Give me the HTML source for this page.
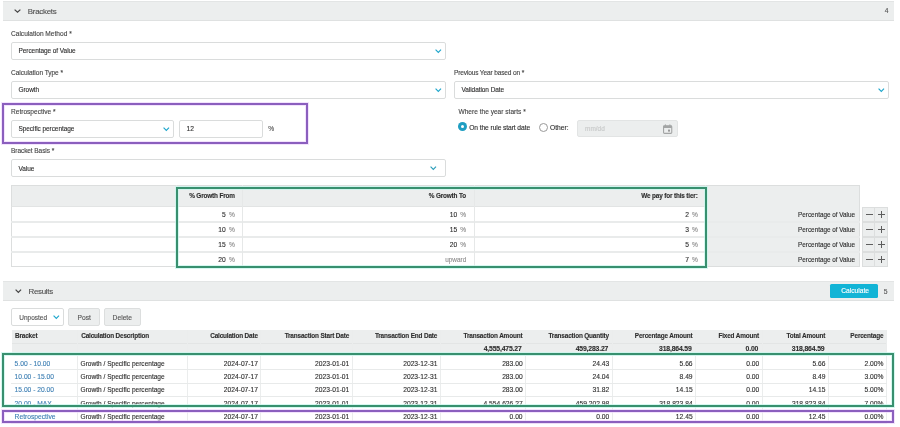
<!DOCTYPE html>
<html><head><meta charset="utf-8"><style>
html,body{margin:0;padding:0;background:#fff;}
body{width:900px;height:427px;position:relative;overflow:hidden;font-family:"Liberation Sans",sans-serif;}
.t{position:absolute;white-space:nowrap;line-height:1;-webkit-font-smoothing:antialiased;}
.b{position:absolute;}
</style></head><body>
<div id="w" style="position:absolute;left:0;top:0;width:900px;height:427px;will-change:transform">
<div class="b" style="left:3px;top:1px;width:891px;height:20px;background:#eceeee;border-top:1px solid #e3e5e5;border-bottom:1px solid #dfe1e1;box-sizing:border-box"></div>
<svg class="b" style="left:12.20px;top:7.30px;overflow:visible" width="11.00" height="7.90" viewBox="0 0 11.00 7.90"><polyline points="2.62,2.62 5.50,5.27 8.38,2.62" fill="none" stroke="#444" stroke-width="1.25" stroke-linecap="butt" stroke-linejoin="miter"/></svg>
<div class="t" style="left:27.8px;top:7.99px;font-size:7.93px;font-weight:400;color:#505050;letter-spacing:0px;-webkit-text-stroke:0.12px #505050;letter-spacing:-0.28px">Brackets</div>
<div class="t" style="right:11.5px;top:8.33px;font-size:6.7px;font-weight:400;color:#555;letter-spacing:0px;-webkit-text-stroke:0.12px #555;">4</div>
<div class="t" style="left:11px;top:31.02px;font-size:6.59px;font-weight:400;color:#454545;letter-spacing:0px;-webkit-text-stroke:0.12px #454545;">Calculation Method *</div>
<div class="b" style="left:11px;top:42px;width:435px;height:18px;background:#fff;border:1px solid #dadcdc;border-radius:2px;box-sizing:border-box"></div>
<div class="t" style="left:18.5px;top:48.11px;font-size:6.49px;font-weight:400;color:#2e2e2e;letter-spacing:0px;-webkit-text-stroke:0.12px #2e2e2e;letter-spacing:-0.06px">Percentage of Value</div>
<svg class="b" style="left:432.60px;top:46.60px;overflow:visible" width="10.60" height="7.90" viewBox="0 0 10.60 7.90"><polyline points="2.58,2.58 5.30,5.32 8.02,2.58" fill="none" stroke="#1ea6cc" stroke-width="1.15" stroke-linecap="butt" stroke-linejoin="miter"/></svg>
<div class="t" style="left:11px;top:70.02px;font-size:6.59px;font-weight:400;color:#454545;letter-spacing:0px;-webkit-text-stroke:0.12px #454545;letter-spacing:-0.05px">Calculation Type *</div>
<div class="b" style="left:11px;top:81px;width:435px;height:18px;background:#fff;border:1px solid #dadcdc;border-radius:2px;box-sizing:border-box"></div>
<div class="t" style="left:18.5px;top:87.11px;font-size:6.49px;font-weight:400;color:#2e2e2e;letter-spacing:0px;-webkit-text-stroke:0.12px #2e2e2e;letter-spacing:-0.06px">Growth</div>
<svg class="b" style="left:432.60px;top:85.60px;overflow:visible" width="10.60" height="7.90" viewBox="0 0 10.60 7.90"><polyline points="2.58,2.58 5.30,5.33 8.02,2.58" fill="none" stroke="#1ea6cc" stroke-width="1.15" stroke-linecap="butt" stroke-linejoin="miter"/></svg>
<div class="t" style="left:454px;top:70.22px;font-size:6.59px;font-weight:400;color:#454545;letter-spacing:0px;-webkit-text-stroke:0.12px #454545;letter-spacing:-0.16px">Previous Year based on *</div>
<div class="b" style="left:454px;top:81px;width:435px;height:18px;background:#fff;border:1px solid #dadcdc;border-radius:2px;box-sizing:border-box"></div>
<div class="t" style="left:461.5px;top:87.11px;font-size:6.49px;font-weight:400;color:#2e2e2e;letter-spacing:0px;-webkit-text-stroke:0.12px #2e2e2e;letter-spacing:-0.06px">Validation Date</div>
<svg class="b" style="left:875.60px;top:85.60px;overflow:visible" width="10.60" height="7.90" viewBox="0 0 10.60 7.90"><polyline points="2.58,2.58 5.30,5.33 8.03,2.58" fill="none" stroke="#1ea6cc" stroke-width="1.15" stroke-linecap="butt" stroke-linejoin="miter"/></svg>
<div class="b" style="left:2px;top:103px;width:306px;height:41px;border:2px solid #8b5fbe;box-sizing:border-box;box-shadow:0 0 0 1px rgba(238,215,252,.7),inset 0 0 0 1px rgba(238,215,252,.7);"></div>
<div class="t" style="left:11px;top:109.42px;font-size:6.59px;font-weight:400;color:#454545;letter-spacing:0px;-webkit-text-stroke:0.12px #454545;">Retrospective *</div>
<div class="b" style="left:11px;top:120px;width:163px;height:18px;background:#fff;border:1px solid #dadcdc;border-radius:2px;box-sizing:border-box"></div>
<div class="t" style="left:18.5px;top:126.11px;font-size:6.49px;font-weight:400;color:#2e2e2e;letter-spacing:0px;-webkit-text-stroke:0.12px #2e2e2e;letter-spacing:-0.06px">Specific percentage</div>
<svg class="b" style="left:160.60px;top:124.60px;overflow:visible" width="10.60" height="7.90" viewBox="0 0 10.60 7.90"><polyline points="2.58,2.58 5.30,5.33 8.02,2.58" fill="none" stroke="#1ea6cc" stroke-width="1.15" stroke-linecap="butt" stroke-linejoin="miter"/></svg>
<div class="b" style="left:179px;top:120px;width:84px;height:18px;background:#fff;border:1px solid #dadcdc;border-radius:2px;box-sizing:border-box"></div>
<div class="t" style="left:186.6px;top:126.13px;font-size:6.7px;font-weight:400;color:#2e2e2e;letter-spacing:0px;-webkit-text-stroke:0.12px #2e2e2e;">12</div>
<div class="t" style="left:268.2px;top:126.13px;font-size:6.7px;font-weight:400;color:#555;letter-spacing:0px;-webkit-text-stroke:0.12px #555;">%</div>
<div class="t" style="left:458.5px;top:109.02px;font-size:6.59px;font-weight:400;color:#454545;letter-spacing:0px;-webkit-text-stroke:0.12px #454545;">Where the year starts *</div>
<div class="b" style="left:458px;top:122.3px;width:9px;height:9px;border-radius:50%;background:#1f9ec2"></div>
<div class="b" style="left:461px;top:125.3px;width:3px;height:3px;border-radius:50%;background:#fff"></div>
<div class="t" style="left:469.2px;top:124.73px;font-size:6.7px;font-weight:400;color:#2e2e2e;letter-spacing:0px;-webkit-text-stroke:0.12px #2e2e2e;letter-spacing:-0.09px">On the rule start date</div>
<div class="b" style="left:538.5px;top:122.5px;width:9px;height:9px;border-radius:50%;border:0.8px solid #999;box-sizing:border-box;background:#fff"></div>
<div class="t" style="left:550px;top:124.73px;font-size:6.7px;font-weight:400;color:#2e2e2e;letter-spacing:0px;-webkit-text-stroke:0.12px #2e2e2e;">Other:</div>
<div class="b" style="left:577px;top:120px;width:101px;height:17px;background:#eceeee;border:1px solid #e2e4e4;border-radius:2px;box-sizing:border-box"></div>
<div class="t" style="left:585px;top:126.11px;font-size:6.49px;font-weight:400;color:#c8caca;letter-spacing:0px;-webkit-text-stroke:0.12px #c8caca;">mm/dd</div>
<svg class="b" style="left:663px;top:123.5px" width="9.5" height="10" viewBox="0 0 9.5 10"><rect x="0.55" y="1.8" width="8.2" height="7.6" rx="0.9" fill="none" stroke="#a3a5a5" stroke-width="1.1"/><rect x="0.55" y="1.8" width="8.2" height="2.2" fill="#a3a5a5"/><line x1="2.4" y1="0.4" x2="2.4" y2="2.2" stroke="#a3a5a5" stroke-width="1"/><line x1="6.9" y1="0.4" x2="6.9" y2="2.2" stroke="#a3a5a5" stroke-width="1"/><rect x="5" y="5.6" width="2" height="2" fill="#999"/></svg>
<div class="t" style="left:11px;top:148.02px;font-size:6.59px;font-weight:400;color:#454545;letter-spacing:0px;-webkit-text-stroke:0.12px #454545;letter-spacing:-0.1px">Bracket Basis *</div>
<div class="b" style="left:11px;top:159px;width:435px;height:18px;background:#fff;border:1px solid #dadcdc;border-radius:2px;box-sizing:border-box"></div>
<div class="t" style="left:18.5px;top:165.91px;font-size:6.49px;font-weight:400;color:#2e2e2e;letter-spacing:0px;-webkit-text-stroke:0.12px #2e2e2e;letter-spacing:-0.06px">Value</div>
<svg class="b" style="left:428.40px;top:163.60px;overflow:visible" width="10.60" height="7.90" viewBox="0 0 10.60 7.90"><polyline points="2.58,2.58 5.30,5.33 8.02,2.58" fill="none" stroke="#2b9db9" stroke-width="1.15" stroke-linecap="butt" stroke-linejoin="miter"/></svg>
<div class="b" style="left:11px;top:185px;width:849px;height:82px;background:#fff;border:1px solid #dcdede;box-sizing:border-box"></div>
<div class="b" style="left:11px;top:185px;width:849px;height:22px;background:#eceeee;border:1px solid #dcdede;border-bottom:1px solid #e2e4e4;box-sizing:border-box"></div>
<div class="b" style="left:705px;top:206px;width:155px;height:61px;background:#eceeee;border-right:1px solid #dcdede;border-bottom:1px solid #dcdede;box-sizing:border-box"></div>
<div class="b" style="left:11px;top:221px;width:849px;height:2px;background:#e9ebeb"></div>
<div class="b" style="left:11px;top:236px;width:849px;height:2px;background:#e9ebeb"></div>
<div class="b" style="left:11px;top:251px;width:849px;height:2px;background:#e9ebeb"></div>
<div class="b" style="left:175.5px;top:185px;width:1.5px;height:82px;background:#e6e8e8"></div>
<div class="b" style="left:241.5px;top:185px;width:1.5px;height:82px;background:#e6e8e8"></div>
<div class="b" style="left:473.5px;top:185px;width:1.5px;height:82px;background:#e6e8e8"></div>
<div class="b" style="left:704.5px;top:185px;width:1.5px;height:82px;background:#e6e8e8"></div>
<div class="t" style="right:665.2px;top:193.37px;font-size:6.41px;font-weight:700;color:#2e2e2e;letter-spacing:-0.16px;-webkit-text-stroke:0.12px #2e2e2e;">% Growth From</div>
<div class="t" style="right:434px;top:193.37px;font-size:6.41px;font-weight:700;color:#2e2e2e;letter-spacing:-0.16px;-webkit-text-stroke:0.12px #2e2e2e;">% Growth To</div>
<div class="t" style="right:202.39999999999998px;top:193.37px;font-size:6.41px;font-weight:700;color:#2e2e2e;letter-spacing:-0.16px;-webkit-text-stroke:0.12px #2e2e2e;">We pay for this tier:</div>
<div class="t" style="right:674.2px;top:211.73px;font-size:6.7px;font-weight:400;color:#2e2e2e;letter-spacing:0px;-webkit-text-stroke:0.12px #2e2e2e;">5</div>
<div class="t" style="right:665.2px;top:211.82px;font-size:6.59px;font-weight:400;color:#8a8a8a;letter-spacing:0px;-webkit-text-stroke:0.12px #8a8a8a;">%</div>
<div class="t" style="right:442.8px;top:211.73px;font-size:6.7px;font-weight:400;color:#2e2e2e;letter-spacing:0px;-webkit-text-stroke:0.12px #2e2e2e;">10</div>
<div class="t" style="right:433.8px;top:211.82px;font-size:6.59px;font-weight:400;color:#8a8a8a;letter-spacing:0px;-webkit-text-stroke:0.12px #8a8a8a;">%</div>
<div class="t" style="right:211px;top:211.73px;font-size:6.7px;font-weight:400;color:#2e2e2e;letter-spacing:0px;-webkit-text-stroke:0.12px #2e2e2e;">2</div>
<div class="t" style="right:202.20000000000005px;top:211.82px;font-size:6.59px;font-weight:400;color:#8a8a8a;letter-spacing:0px;-webkit-text-stroke:0.12px #8a8a8a;">%</div>
<div class="t" style="right:45px;top:212.04px;font-size:6.33px;font-weight:400;color:#2e2e2e;letter-spacing:0px;-webkit-text-stroke:0.12px #2e2e2e;">Percentage of Value</div>
<div class="b" style="left:862.3px;top:206.8px;width:12.900000000000091px;height:15.0px;background:#eceeee;border:1px solid #dcdede;box-sizing:border-box"></div>
<div class="b" style="left:875.2px;top:206.8px;width:12.799999999999955px;height:15.0px;background:#eceeee;border:1px solid #dcdede;border-left:none;box-sizing:border-box"></div>
<div class="b" style="left:865.5px;top:213.8px;width:7.2999999999999545px;height:1.0999999999999943px;background:#5e5e5e"></div>
<div class="b" style="left:877.6px;top:213.8px;width:7.399999999999977px;height:1.0999999999999943px;background:#5e5e5e"></div>
<div class="b" style="left:880.75px;top:210.60000000000002px;width:1.1000000000000227px;height:7.399999999999977px;background:#5e5e5e"></div>
<div class="t" style="right:674.2px;top:226.73px;font-size:6.7px;font-weight:400;color:#2e2e2e;letter-spacing:0px;-webkit-text-stroke:0.12px #2e2e2e;">10</div>
<div class="t" style="right:665.2px;top:226.82px;font-size:6.59px;font-weight:400;color:#8a8a8a;letter-spacing:0px;-webkit-text-stroke:0.12px #8a8a8a;">%</div>
<div class="t" style="right:442.8px;top:226.73px;font-size:6.7px;font-weight:400;color:#2e2e2e;letter-spacing:0px;-webkit-text-stroke:0.12px #2e2e2e;">15</div>
<div class="t" style="right:433.8px;top:226.82px;font-size:6.59px;font-weight:400;color:#8a8a8a;letter-spacing:0px;-webkit-text-stroke:0.12px #8a8a8a;">%</div>
<div class="t" style="right:211px;top:226.73px;font-size:6.7px;font-weight:400;color:#2e2e2e;letter-spacing:0px;-webkit-text-stroke:0.12px #2e2e2e;">3</div>
<div class="t" style="right:202.20000000000005px;top:226.82px;font-size:6.59px;font-weight:400;color:#8a8a8a;letter-spacing:0px;-webkit-text-stroke:0.12px #8a8a8a;">%</div>
<div class="t" style="right:45px;top:227.04px;font-size:6.33px;font-weight:400;color:#2e2e2e;letter-spacing:0px;-webkit-text-stroke:0.12px #2e2e2e;">Percentage of Value</div>
<div class="b" style="left:862.3px;top:221.8px;width:12.900000000000091px;height:15.0px;background:#eceeee;border:1px solid #dcdede;box-sizing:border-box"></div>
<div class="b" style="left:875.2px;top:221.8px;width:12.799999999999955px;height:15.0px;background:#eceeee;border:1px solid #dcdede;border-left:none;box-sizing:border-box"></div>
<div class="b" style="left:865.5px;top:228.8px;width:7.2999999999999545px;height:1.0999999999999943px;background:#5e5e5e"></div>
<div class="b" style="left:877.6px;top:228.8px;width:7.399999999999977px;height:1.0999999999999943px;background:#5e5e5e"></div>
<div class="b" style="left:880.75px;top:225.60000000000002px;width:1.1000000000000227px;height:7.399999999999977px;background:#5e5e5e"></div>
<div class="t" style="right:674.2px;top:241.73px;font-size:6.7px;font-weight:400;color:#2e2e2e;letter-spacing:0px;-webkit-text-stroke:0.12px #2e2e2e;">15</div>
<div class="t" style="right:665.2px;top:241.82px;font-size:6.59px;font-weight:400;color:#8a8a8a;letter-spacing:0px;-webkit-text-stroke:0.12px #8a8a8a;">%</div>
<div class="t" style="right:442.8px;top:241.73px;font-size:6.7px;font-weight:400;color:#2e2e2e;letter-spacing:0px;-webkit-text-stroke:0.12px #2e2e2e;">20</div>
<div class="t" style="right:433.8px;top:241.82px;font-size:6.59px;font-weight:400;color:#8a8a8a;letter-spacing:0px;-webkit-text-stroke:0.12px #8a8a8a;">%</div>
<div class="t" style="right:211px;top:241.73px;font-size:6.7px;font-weight:400;color:#2e2e2e;letter-spacing:0px;-webkit-text-stroke:0.12px #2e2e2e;">5</div>
<div class="t" style="right:202.20000000000005px;top:241.82px;font-size:6.59px;font-weight:400;color:#8a8a8a;letter-spacing:0px;-webkit-text-stroke:0.12px #8a8a8a;">%</div>
<div class="t" style="right:45px;top:242.04px;font-size:6.33px;font-weight:400;color:#2e2e2e;letter-spacing:0px;-webkit-text-stroke:0.12px #2e2e2e;">Percentage of Value</div>
<div class="b" style="left:862.3px;top:236.8px;width:12.900000000000091px;height:15.0px;background:#eceeee;border:1px solid #dcdede;box-sizing:border-box"></div>
<div class="b" style="left:875.2px;top:236.8px;width:12.799999999999955px;height:15.0px;background:#eceeee;border:1px solid #dcdede;border-left:none;box-sizing:border-box"></div>
<div class="b" style="left:865.5px;top:243.8px;width:7.2999999999999545px;height:1.0999999999999943px;background:#5e5e5e"></div>
<div class="b" style="left:877.6px;top:243.8px;width:7.399999999999977px;height:1.0999999999999943px;background:#5e5e5e"></div>
<div class="b" style="left:880.75px;top:240.60000000000002px;width:1.1000000000000227px;height:7.399999999999977px;background:#5e5e5e"></div>
<div class="t" style="right:674.2px;top:256.73px;font-size:6.7px;font-weight:400;color:#2e2e2e;letter-spacing:0px;-webkit-text-stroke:0.12px #2e2e2e;">20</div>
<div class="t" style="right:665.2px;top:256.82px;font-size:6.59px;font-weight:400;color:#8a8a8a;letter-spacing:0px;-webkit-text-stroke:0.12px #8a8a8a;">%</div>
<div class="t" style="right:433.8px;top:256.99px;font-size:6.39px;font-weight:400;color:#8f8f8f;letter-spacing:0px;-webkit-text-stroke:0.12px #8f8f8f;">upward</div>
<div class="t" style="right:211px;top:256.73px;font-size:6.7px;font-weight:400;color:#2e2e2e;letter-spacing:0px;-webkit-text-stroke:0.12px #2e2e2e;">7</div>
<div class="t" style="right:202.20000000000005px;top:256.82px;font-size:6.59px;font-weight:400;color:#8a8a8a;letter-spacing:0px;-webkit-text-stroke:0.12px #8a8a8a;">%</div>
<div class="t" style="right:45px;top:257.04px;font-size:6.33px;font-weight:400;color:#2e2e2e;letter-spacing:0px;-webkit-text-stroke:0.12px #2e2e2e;">Percentage of Value</div>
<div class="b" style="left:862.3px;top:251.8px;width:12.900000000000091px;height:15.0px;background:#eceeee;border:1px solid #dcdede;box-sizing:border-box"></div>
<div class="b" style="left:875.2px;top:251.8px;width:12.799999999999955px;height:15.0px;background:#eceeee;border:1px solid #dcdede;border-left:none;box-sizing:border-box"></div>
<div class="b" style="left:865.5px;top:258.8px;width:7.2999999999999545px;height:1.1000000000000227px;background:#5e5e5e"></div>
<div class="b" style="left:877.6px;top:258.8px;width:7.399999999999977px;height:1.1000000000000227px;background:#5e5e5e"></div>
<div class="b" style="left:880.75px;top:255.60000000000002px;width:1.1000000000000227px;height:7.399999999999977px;background:#5e5e5e"></div>
<div class="b" style="left:176px;top:187px;width:531px;height:81px;border:2px solid #38906f;box-sizing:border-box;box-shadow:0 0 0 1px rgba(200,246,236,.75),inset 0 0 0 1px rgba(200,246,236,.75);"></div>
<div class="b" style="left:3px;top:281px;width:891px;height:19.69999999999999px;background:#eceeee;border-top:1px solid #e3e5e5;border-bottom:1px solid #dfe1e1;box-sizing:border-box"></div>
<svg class="b" style="left:12.80px;top:286.80px;overflow:visible" width="10.70" height="8.00" viewBox="0 0 10.70 8.00"><polyline points="2.62,2.62 5.35,5.38 8.07,2.62" fill="none" stroke="#444" stroke-width="1.25" stroke-linecap="butt" stroke-linejoin="miter"/></svg>
<div class="t" style="left:28.5px;top:287.79px;font-size:7.93px;font-weight:400;color:#505050;letter-spacing:0px;-webkit-text-stroke:0.12px #505050;letter-spacing:-0.28px">Results</div>
<div class="b" style="left:830.2px;top:283.9px;width:47.799999999999955px;height:14.0px;background:#12b4d6;border-radius:1.5px"></div>
<div class="t" style="left:841.2px;top:288.33px;font-size:6.7px;font-weight:400;color:#ffffff;letter-spacing:0px;-webkit-text-stroke:0.12px #ffffff;">Calculate</div>
<div class="t" style="right:12.600000000000023px;top:288.84px;font-size:6.8px;font-weight:400;color:#555;letter-spacing:0px;-webkit-text-stroke:0.12px #555;">5</div>
<div class="b" style="left:11px;top:308px;width:53px;height:18px;background:#fff;border:1px solid #dadcdc;border-radius:2px;box-sizing:border-box"></div>
<div class="t" style="left:19.3px;top:314.71px;font-size:6.49px;font-weight:400;color:#555;letter-spacing:0px;-webkit-text-stroke:0.12px #555;">Unposted</div>
<svg class="b" style="left:51.20px;top:313.10px;overflow:visible" width="10.60" height="7.90" viewBox="0 0 10.60 7.90"><polyline points="2.58,2.58 5.30,5.32 8.02,2.58" fill="none" stroke="#1ea6cc" stroke-width="1.15" stroke-linecap="butt" stroke-linejoin="miter"/></svg>
<div class="b" style="left:68px;top:308px;width:32px;height:18px;background:#eceeee;border:1px solid #dcdede;border-radius:2px;box-sizing:border-box"></div>
<div class="t" style="left:77.5px;top:314.53px;font-size:6.7px;font-weight:400;color:#555;letter-spacing:0px;-webkit-text-stroke:0.12px #555;">Post</div>
<div class="b" style="left:104px;top:308px;width:37px;height:18px;background:#eceeee;border:1px solid #dcdede;border-radius:2px;box-sizing:border-box"></div>
<div class="t" style="left:112.6px;top:314.53px;font-size:6.7px;font-weight:400;color:#555;letter-spacing:0px;-webkit-text-stroke:0.12px #555;">Delete</div>
<div class="b" style="left:11.5px;top:330px;width:875.0px;height:25.5px;background:#eceeee"></div>
<div class="b" style="left:11.5px;top:342.6px;width:875.0px;height:0.7999999999999545px;background:#e3e5e5"></div>
<div class="b" style="left:77px;top:330px;width:1px;height:94px;background:#ebeded"></div>
<div class="b" style="left:187px;top:330px;width:1px;height:94px;background:#ebeded"></div>
<div class="b" style="left:260px;top:330px;width:1px;height:94px;background:#ebeded"></div>
<div class="b" style="left:352px;top:330px;width:1px;height:94px;background:#ebeded"></div>
<div class="b" style="left:440px;top:330px;width:1px;height:94px;background:#ebeded"></div>
<div class="b" style="left:525px;top:330px;width:1px;height:94px;background:#ebeded"></div>
<div class="b" style="left:612px;top:330px;width:1px;height:94px;background:#ebeded"></div>
<div class="b" style="left:695px;top:330px;width:1px;height:94px;background:#ebeded"></div>
<div class="b" style="left:762px;top:330px;width:1px;height:94px;background:#ebeded"></div>
<div class="b" style="left:828px;top:330px;width:1px;height:94px;background:#ebeded"></div>
<div class="b" style="left:886px;top:330px;width:1px;height:94px;background:#ebeded"></div>
<div class="b" style="left:11px;top:369px;width:876px;height:1px;background:#e8eaea"></div>
<div class="b" style="left:11px;top:383px;width:876px;height:1px;background:#e8eaea"></div>
<div class="b" style="left:11px;top:396px;width:876px;height:1px;background:#e8eaea"></div>
<div class="b" style="left:11px;top:410px;width:876px;height:1px;background:#e8eaea"></div>
<div class="b" style="left:11px;top:423px;width:876px;height:1px;background:#e8eaea"></div>
<div class="t" style="left:15.0px;top:333.47px;font-size:6.41px;font-weight:700;color:#2e2e2e;letter-spacing:-0.16px;-webkit-text-stroke:0.12px #2e2e2e;">Bracket</div>
<div class="t" style="left:81.2px;top:333.47px;font-size:6.41px;font-weight:700;color:#2e2e2e;letter-spacing:-0.16px;-webkit-text-stroke:0.12px #2e2e2e;">Calculation Description</div>
<div class="t" style="right:642.2px;top:333.47px;font-size:6.41px;font-weight:700;color:#2e2e2e;letter-spacing:-0.16px;-webkit-text-stroke:0.12px #2e2e2e;">Calculation Date</div>
<div class="t" style="right:550.9px;top:333.47px;font-size:6.41px;font-weight:700;color:#2e2e2e;letter-spacing:-0.16px;-webkit-text-stroke:0.12px #2e2e2e;">Transaction Start Date</div>
<div class="t" style="right:462.8px;top:333.47px;font-size:6.41px;font-weight:700;color:#2e2e2e;letter-spacing:-0.16px;-webkit-text-stroke:0.12px #2e2e2e;">Transaction End Date</div>
<div class="t" style="right:377.6px;top:333.47px;font-size:6.41px;font-weight:700;color:#2e2e2e;letter-spacing:-0.16px;-webkit-text-stroke:0.12px #2e2e2e;">Transaction Amount</div>
<div class="t" style="right:291.0px;top:333.47px;font-size:6.41px;font-weight:700;color:#2e2e2e;letter-spacing:-0.16px;-webkit-text-stroke:0.12px #2e2e2e;">Transaction Quantity</div>
<div class="t" style="right:207.60000000000002px;top:333.47px;font-size:6.41px;font-weight:700;color:#2e2e2e;letter-spacing:-0.16px;-webkit-text-stroke:0.12px #2e2e2e;">Percentage Amount</div>
<div class="t" style="right:141.0px;top:333.47px;font-size:6.41px;font-weight:700;color:#2e2e2e;letter-spacing:-0.16px;-webkit-text-stroke:0.12px #2e2e2e;">Fixed Amount</div>
<div class="t" style="right:74.80000000000007px;top:333.47px;font-size:6.41px;font-weight:700;color:#2e2e2e;letter-spacing:-0.16px;-webkit-text-stroke:0.12px #2e2e2e;">Total Amount</div>
<div class="t" style="right:16.700000000000045px;top:333.47px;font-size:6.41px;font-weight:700;color:#2e2e2e;letter-spacing:-0.16px;-webkit-text-stroke:0.12px #2e2e2e;">Percentage</div>
<div class="t" style="right:378.4px;top:346.02px;font-size:6.83px;font-weight:700;color:#2e2e2e;letter-spacing:-0.16px;-webkit-text-stroke:0.12px #2e2e2e;">4,555,475.27</div>
<div class="t" style="right:291.79999999999995px;top:346.02px;font-size:6.83px;font-weight:700;color:#2e2e2e;letter-spacing:-0.16px;-webkit-text-stroke:0.12px #2e2e2e;">459,283.27</div>
<div class="t" style="right:208.39999999999998px;top:346.02px;font-size:6.83px;font-weight:700;color:#2e2e2e;letter-spacing:-0.16px;-webkit-text-stroke:0.12px #2e2e2e;">318,864.59</div>
<div class="t" style="right:141.79999999999995px;top:346.02px;font-size:6.83px;font-weight:700;color:#2e2e2e;letter-spacing:-0.16px;-webkit-text-stroke:0.12px #2e2e2e;">0.00</div>
<div class="t" style="right:75.60000000000002px;top:346.02px;font-size:6.83px;font-weight:700;color:#2e2e2e;letter-spacing:-0.16px;-webkit-text-stroke:0.12px #2e2e2e;">318,864.59</div>
<div class="t" style="left:14.6px;top:360.83px;font-size:6.7px;font-weight:400;color:#3d7fb3;letter-spacing:0px;-webkit-text-stroke:0.12px #3d7fb3;">5.00 - 10.00</div>
<div class="t" style="left:80.6px;top:360.96px;font-size:6.55px;font-weight:400;color:#2e2e2e;letter-spacing:0px;-webkit-text-stroke:0.12px #2e2e2e;">Growth / Specific percentage</div>
<div class="t" style="right:642px;top:360.83px;font-size:6.7px;font-weight:400;color:#2e2e2e;letter-spacing:0px;-webkit-text-stroke:0.12px #2e2e2e;">2024-07-17</div>
<div class="t" style="right:550.7px;top:360.83px;font-size:6.7px;font-weight:400;color:#2e2e2e;letter-spacing:0px;-webkit-text-stroke:0.12px #2e2e2e;">2023-01-01</div>
<div class="t" style="right:462.6px;top:360.83px;font-size:6.7px;font-weight:400;color:#2e2e2e;letter-spacing:0px;-webkit-text-stroke:0.12px #2e2e2e;">2023-12-31</div>
<div class="t" style="right:377.4px;top:360.83px;font-size:6.7px;font-weight:400;color:#2e2e2e;letter-spacing:0px;-webkit-text-stroke:0.12px #2e2e2e;">283.00</div>
<div class="t" style="right:290.79999999999995px;top:360.83px;font-size:6.7px;font-weight:400;color:#2e2e2e;letter-spacing:0px;-webkit-text-stroke:0.12px #2e2e2e;">24.43</div>
<div class="t" style="right:207.39999999999998px;top:360.83px;font-size:6.7px;font-weight:400;color:#2e2e2e;letter-spacing:0px;-webkit-text-stroke:0.12px #2e2e2e;">5.66</div>
<div class="t" style="right:140.79999999999995px;top:360.83px;font-size:6.7px;font-weight:400;color:#2e2e2e;letter-spacing:0px;-webkit-text-stroke:0.12px #2e2e2e;">0.00</div>
<div class="t" style="right:74.60000000000002px;top:360.83px;font-size:6.7px;font-weight:400;color:#2e2e2e;letter-spacing:0px;-webkit-text-stroke:0.12px #2e2e2e;">5.66</div>
<div class="t" style="right:16.5px;top:360.83px;font-size:6.7px;font-weight:400;color:#2e2e2e;letter-spacing:0px;-webkit-text-stroke:0.12px #2e2e2e;">2.00%</div>
<div class="t" style="left:14.6px;top:374.13px;font-size:6.7px;font-weight:400;color:#3d7fb3;letter-spacing:0px;-webkit-text-stroke:0.12px #3d7fb3;">10.00 - 15.00</div>
<div class="t" style="left:80.6px;top:374.26px;font-size:6.55px;font-weight:400;color:#2e2e2e;letter-spacing:0px;-webkit-text-stroke:0.12px #2e2e2e;">Growth / Specific percentage</div>
<div class="t" style="right:642px;top:374.13px;font-size:6.7px;font-weight:400;color:#2e2e2e;letter-spacing:0px;-webkit-text-stroke:0.12px #2e2e2e;">2024-07-17</div>
<div class="t" style="right:550.7px;top:374.13px;font-size:6.7px;font-weight:400;color:#2e2e2e;letter-spacing:0px;-webkit-text-stroke:0.12px #2e2e2e;">2023-01-01</div>
<div class="t" style="right:462.6px;top:374.13px;font-size:6.7px;font-weight:400;color:#2e2e2e;letter-spacing:0px;-webkit-text-stroke:0.12px #2e2e2e;">2023-12-31</div>
<div class="t" style="right:377.4px;top:374.13px;font-size:6.7px;font-weight:400;color:#2e2e2e;letter-spacing:0px;-webkit-text-stroke:0.12px #2e2e2e;">283.00</div>
<div class="t" style="right:290.79999999999995px;top:374.13px;font-size:6.7px;font-weight:400;color:#2e2e2e;letter-spacing:0px;-webkit-text-stroke:0.12px #2e2e2e;">24.04</div>
<div class="t" style="right:207.39999999999998px;top:374.13px;font-size:6.7px;font-weight:400;color:#2e2e2e;letter-spacing:0px;-webkit-text-stroke:0.12px #2e2e2e;">8.49</div>
<div class="t" style="right:140.79999999999995px;top:374.13px;font-size:6.7px;font-weight:400;color:#2e2e2e;letter-spacing:0px;-webkit-text-stroke:0.12px #2e2e2e;">0.00</div>
<div class="t" style="right:74.60000000000002px;top:374.13px;font-size:6.7px;font-weight:400;color:#2e2e2e;letter-spacing:0px;-webkit-text-stroke:0.12px #2e2e2e;">8.49</div>
<div class="t" style="right:16.5px;top:374.13px;font-size:6.7px;font-weight:400;color:#2e2e2e;letter-spacing:0px;-webkit-text-stroke:0.12px #2e2e2e;">3.00%</div>
<div class="t" style="left:14.6px;top:387.33px;font-size:6.7px;font-weight:400;color:#3d7fb3;letter-spacing:0px;-webkit-text-stroke:0.12px #3d7fb3;">15.00 - 20.00</div>
<div class="t" style="left:80.6px;top:387.46px;font-size:6.55px;font-weight:400;color:#2e2e2e;letter-spacing:0px;-webkit-text-stroke:0.12px #2e2e2e;">Growth / Specific percentage</div>
<div class="t" style="right:642px;top:387.33px;font-size:6.7px;font-weight:400;color:#2e2e2e;letter-spacing:0px;-webkit-text-stroke:0.12px #2e2e2e;">2024-07-17</div>
<div class="t" style="right:550.7px;top:387.33px;font-size:6.7px;font-weight:400;color:#2e2e2e;letter-spacing:0px;-webkit-text-stroke:0.12px #2e2e2e;">2023-01-01</div>
<div class="t" style="right:462.6px;top:387.33px;font-size:6.7px;font-weight:400;color:#2e2e2e;letter-spacing:0px;-webkit-text-stroke:0.12px #2e2e2e;">2023-12-31</div>
<div class="t" style="right:377.4px;top:387.33px;font-size:6.7px;font-weight:400;color:#2e2e2e;letter-spacing:0px;-webkit-text-stroke:0.12px #2e2e2e;">283.00</div>
<div class="t" style="right:290.79999999999995px;top:387.33px;font-size:6.7px;font-weight:400;color:#2e2e2e;letter-spacing:0px;-webkit-text-stroke:0.12px #2e2e2e;">31.82</div>
<div class="t" style="right:207.39999999999998px;top:387.33px;font-size:6.7px;font-weight:400;color:#2e2e2e;letter-spacing:0px;-webkit-text-stroke:0.12px #2e2e2e;">14.15</div>
<div class="t" style="right:140.79999999999995px;top:387.33px;font-size:6.7px;font-weight:400;color:#2e2e2e;letter-spacing:0px;-webkit-text-stroke:0.12px #2e2e2e;">0.00</div>
<div class="t" style="right:74.60000000000002px;top:387.33px;font-size:6.7px;font-weight:400;color:#2e2e2e;letter-spacing:0px;-webkit-text-stroke:0.12px #2e2e2e;">14.15</div>
<div class="t" style="right:16.5px;top:387.33px;font-size:6.7px;font-weight:400;color:#2e2e2e;letter-spacing:0px;-webkit-text-stroke:0.12px #2e2e2e;">5.00%</div>
<div class="t" style="left:14.6px;top:400.53px;font-size:6.7px;font-weight:400;color:#3d7fb3;letter-spacing:0px;-webkit-text-stroke:0.12px #3d7fb3;">20.00 - MAX</div>
<div class="t" style="left:80.6px;top:400.66px;font-size:6.55px;font-weight:400;color:#2e2e2e;letter-spacing:0px;-webkit-text-stroke:0.12px #2e2e2e;">Growth / Specific percentage</div>
<div class="t" style="right:642px;top:400.53px;font-size:6.7px;font-weight:400;color:#2e2e2e;letter-spacing:0px;-webkit-text-stroke:0.12px #2e2e2e;">2024-07-17</div>
<div class="t" style="right:550.7px;top:400.53px;font-size:6.7px;font-weight:400;color:#2e2e2e;letter-spacing:0px;-webkit-text-stroke:0.12px #2e2e2e;">2023-01-01</div>
<div class="t" style="right:462.6px;top:400.53px;font-size:6.7px;font-weight:400;color:#2e2e2e;letter-spacing:0px;-webkit-text-stroke:0.12px #2e2e2e;">2023-12-31</div>
<div class="t" style="right:377.4px;top:400.53px;font-size:6.7px;font-weight:400;color:#2e2e2e;letter-spacing:0px;-webkit-text-stroke:0.12px #2e2e2e;">4,554,626.27</div>
<div class="t" style="right:290.79999999999995px;top:400.53px;font-size:6.7px;font-weight:400;color:#2e2e2e;letter-spacing:0px;-webkit-text-stroke:0.12px #2e2e2e;">459,202.98</div>
<div class="t" style="right:207.39999999999998px;top:400.53px;font-size:6.7px;font-weight:400;color:#2e2e2e;letter-spacing:0px;-webkit-text-stroke:0.12px #2e2e2e;">318,823.84</div>
<div class="t" style="right:140.79999999999995px;top:400.53px;font-size:6.7px;font-weight:400;color:#2e2e2e;letter-spacing:0px;-webkit-text-stroke:0.12px #2e2e2e;">0.00</div>
<div class="t" style="right:74.60000000000002px;top:400.53px;font-size:6.7px;font-weight:400;color:#2e2e2e;letter-spacing:0px;-webkit-text-stroke:0.12px #2e2e2e;">318,823.84</div>
<div class="t" style="right:16.5px;top:400.53px;font-size:6.7px;font-weight:400;color:#2e2e2e;letter-spacing:0px;-webkit-text-stroke:0.12px #2e2e2e;">7.00%</div>
<div class="t" style="left:14.6px;top:413.63px;font-size:6.7px;font-weight:400;color:#3d7fb3;letter-spacing:0px;-webkit-text-stroke:0.12px #3d7fb3;">Retrospective</div>
<div class="t" style="left:80.6px;top:413.76px;font-size:6.55px;font-weight:400;color:#2e2e2e;letter-spacing:0px;-webkit-text-stroke:0.12px #2e2e2e;">Growth / Specific percentage</div>
<div class="t" style="right:642px;top:413.63px;font-size:6.7px;font-weight:400;color:#2e2e2e;letter-spacing:0px;-webkit-text-stroke:0.12px #2e2e2e;">2024-07-17</div>
<div class="t" style="right:550.7px;top:413.63px;font-size:6.7px;font-weight:400;color:#2e2e2e;letter-spacing:0px;-webkit-text-stroke:0.12px #2e2e2e;">2023-01-01</div>
<div class="t" style="right:462.6px;top:413.63px;font-size:6.7px;font-weight:400;color:#2e2e2e;letter-spacing:0px;-webkit-text-stroke:0.12px #2e2e2e;">2023-12-31</div>
<div class="t" style="right:377.4px;top:413.63px;font-size:6.7px;font-weight:400;color:#2e2e2e;letter-spacing:0px;-webkit-text-stroke:0.12px #2e2e2e;">0.00</div>
<div class="t" style="right:290.79999999999995px;top:413.63px;font-size:6.7px;font-weight:400;color:#2e2e2e;letter-spacing:0px;-webkit-text-stroke:0.12px #2e2e2e;">0.00</div>
<div class="t" style="right:207.39999999999998px;top:413.63px;font-size:6.7px;font-weight:400;color:#2e2e2e;letter-spacing:0px;-webkit-text-stroke:0.12px #2e2e2e;">12.45</div>
<div class="t" style="right:140.79999999999995px;top:413.63px;font-size:6.7px;font-weight:400;color:#2e2e2e;letter-spacing:0px;-webkit-text-stroke:0.12px #2e2e2e;">0.00</div>
<div class="t" style="right:74.60000000000002px;top:413.63px;font-size:6.7px;font-weight:400;color:#2e2e2e;letter-spacing:0px;-webkit-text-stroke:0.12px #2e2e2e;">12.45</div>
<div class="t" style="right:16.5px;top:413.63px;font-size:6.7px;font-weight:400;color:#2e2e2e;letter-spacing:0px;-webkit-text-stroke:0.12px #2e2e2e;">0.00%</div>
<div class="b" style="left:2px;top:353px;width:892px;height:54px;border:2px solid #38906f;box-sizing:border-box;box-shadow:0 0 0 1px rgba(200,246,236,.75),inset 0 0 0 1px rgba(200,246,236,.75);"></div>
<div class="b" style="left:2px;top:410px;width:892px;height:13px;border:2px solid #8b5fbe;box-sizing:border-box;box-shadow:0 0 0 1px rgba(238,215,252,.7),inset 0 0 0 1px rgba(238,215,252,.7);"></div>
</div></body></html>
